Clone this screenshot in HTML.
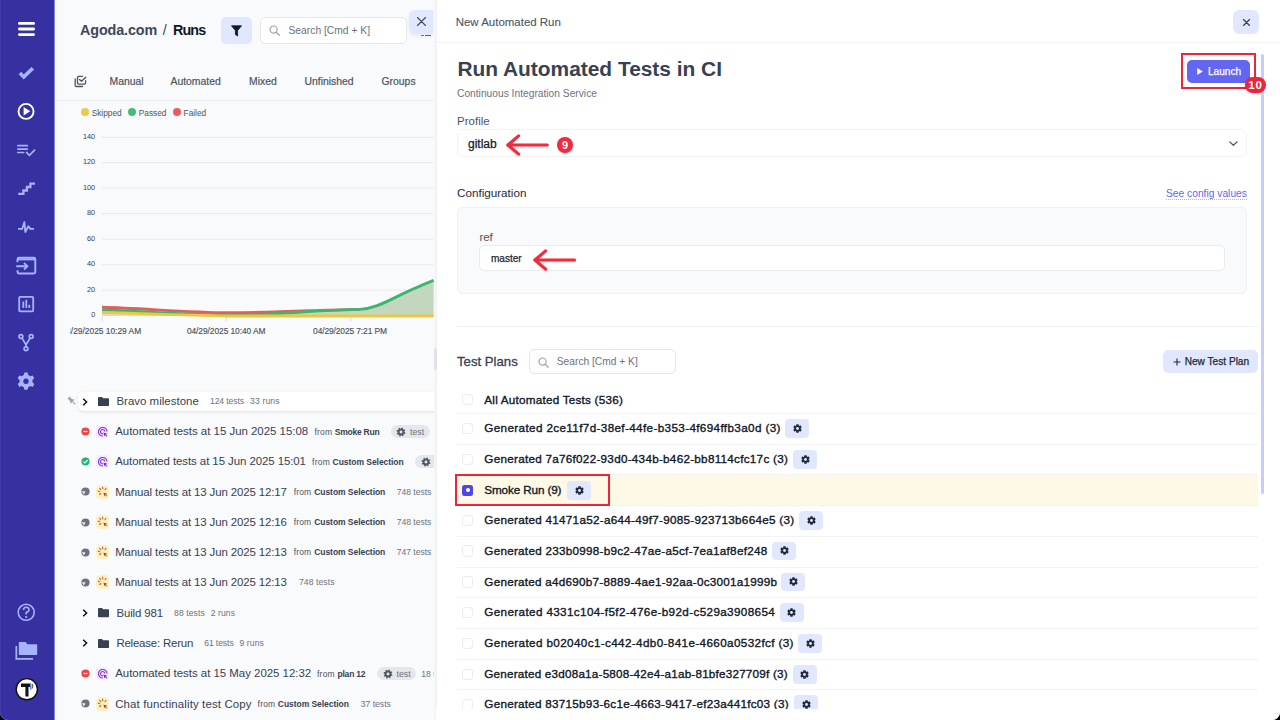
<!DOCTYPE html>
<html><head><meta charset="utf-8">
<style>
*{box-sizing:border-box;margin:0;padding:0}
html,body{width:1280px;height:720px;overflow:hidden;background:#000;font-family:"Liberation Sans",sans-serif;}
.abs{position:absolute}
#root{position:absolute;left:0;top:0;width:1280px;height:720px;overflow:hidden;border-radius:0 0 8px 8px;background:#f9fafb}
#sb{position:absolute;left:0;top:0;width:55px;height:720px;background:#3730a1;border-right:1px solid #8d86d2;box-shadow:inset 1px 0 0 #423ba8}
#sb svg{position:absolute}
#lp{position:absolute;left:0;top:0;width:433.5px;height:720px;overflow:hidden}
#dr{position:absolute;left:437px;top:0;width:843px;height:720px;background:#fff;box-shadow:-1px 0 2px rgba(0,0,0,.03)}
.t{position:absolute;white-space:nowrap;line-height:1}
b{font-weight:bold}
</style></head>
<body><div id="root">
<div id="sb"><svg width="54" height="720" viewBox="0 0 54 720" style="left:0;top:0">
<g fill="#fff">
<rect x="18" y="22" width="17" height="2.8" rx="1.4"/>
<rect x="18" y="27.6" width="17" height="2.8" rx="1.4"/>
<rect x="18" y="33.2" width="17" height="2.8" rx="1.4"/>
</g>
<path d="M19.9 73 L23.8 76.9 L32.8 68.3" fill="none" stroke="#a5b4fc" stroke-width="3.6" stroke-linecap="butt"/>
<circle cx="26.05" cy="111.4" r="7.5" fill="none" stroke="#fff" stroke-width="1.9"/>
<path d="M23.6 107 L30.2 111.3 L23.6 115.6 Z" fill="#fff"/>
<g stroke="#a5b4fc" stroke-width="1.7" fill="none" stroke-linecap="round">
<path d="M17.8 145.7 H27.3 M17.8 149.1 H27.3 M17.8 152.5 H23.6"/>
<path d="M26.5 152.3 L29.4 155.4 L34.6 150.2"/>
</g>
<path d="M18.2 193.9 H23.4 V190.5 H26.9 V187 H30.4 V183.7 H35" fill="none" stroke="#a5b4fc" stroke-width="2.3" stroke-linejoin="miter"/>
<path d="M18 228.9 H22.2 L24.4 222 L25.3 232 L28.4 226.3 L30.4 228.9 H34" fill="none" stroke="#a5b4fc" stroke-width="1.8" stroke-linejoin="round"/>
<g fill="none" stroke="#a5b4fc" stroke-width="1.9">
<path d="M17.5 262.2 V259.2 Q17.5 257.7 19 257.7 H33.8 Q35.3 257.7 35.3 259.2 V272 Q35.3 273.5 33.8 273.5 H19 Q17.5 273.5 17.5 272 V270.2"/>
<path d="M17.5 259.4 H35.3"/>
<path d="M16.3 266.2 H27.3 M24 262.9 L27.4 266.2 L24 269.5"/>
</g>
<g fill="none" stroke="#a5b4fc" stroke-width="1.8">
<rect x="19.2" y="296.9" width="14" height="14.4" rx="1"/>
</g>
<g fill="#a5b4fc">
<rect x="22.4" y="301.5" width="1.8" height="6.4"/>
<rect x="25.4" y="299.8" width="1.8" height="8.1"/>
<rect x="28.4" y="304.8" width="1.8" height="3.1"/>
</g>
<g fill="none" stroke="#a5b4fc" stroke-width="1.7">
<circle cx="20.9" cy="336.5" r="1.9"/>
<circle cx="31.2" cy="336.5" r="1.9"/>
<circle cx="26" cy="348.8" r="1.9"/>
<path d="M22 338.1 L26 344.8 L30.1 338.1 M26 344.8 V346.9"/>
</g>
<path fill="#a5b4fc" d="M24.4 372.5 h3.2 l0.6 2.5 a7 7 0 0 1 2 1.2 l2.5 -0.8 1.6 2.8 -1.9 1.8 a7 7 0 0 1 0 2.3 l1.9 1.8 -1.6 2.8 -2.5 -0.8 a7 7 0 0 1 -2 1.2 l-0.6 2.5 h-3.2 l-0.6 -2.5 a7 7 0 0 1 -2 -1.2 l-2.5 0.8 -1.6 -2.8 1.9 -1.8 a7 7 0 0 1 0 -2.3 l-1.9 -1.8 1.6 -2.8 2.5 0.8 a7 7 0 0 1 2 -1.2 z M26 378.5 a2.8 2.8 0 1 0 0.01 0 z" fill-rule="evenodd"/>
<g fill="none" stroke="#a5b4fc" stroke-width="1.6">
<circle cx="26.2" cy="612.3" r="8"/>
<path d="M23.5 610 Q23.5 607.2 26.2 607.2 Q29 607.2 29 609.8 Q29 611.6 26.2 612.6 V614.4"/>
</g>
<circle cx="26.2" cy="617" r="1.1" fill="#a5b4fc"/>
<path fill="#a5b4fc" d="M19.5 642 H25.5 L27.5 644.2 H36.5 Q37.2 644.2 37.2 645 V654.3 Q37.2 655 36.5 655 H19.5 Q18.8 655 18.8 654.3 V642.7 Q18.8 642 19.5 642 Z"/>
<path d="M16.3 646 V658.8 H33" fill="none" stroke="#a5b4fc" stroke-width="1.7"/>
<circle cx="26.8" cy="689.2" r="10.6" fill="#fff" stroke="#111" stroke-width="1.4"/>
<path d="M21 683.4 H30.8 V687 H28.5 V696.5 H25.4 V687 H21 Z" fill="#141414"/>
<rect x="30" y="684" width="1.6" height="5.6" fill="#5b8cff"/>
<rect x="32.3" y="684" width="0.8" height="4.4" fill="#222"/>
</svg></div><div id="lp"><div class="t" style="left:80.00px;top:23.12px;font-size:14.35px;color:#3f4756;font-weight:bold;letter-spacing:-0.114px;">Agoda.com</div><div class="t" style="left:162.80px;top:23.12px;font-size:14.35px;color:#3f4756;font-weight:normal;">/</div><div class="t" style="left:172.90px;top:23.12px;font-size:14.35px;color:#111827;font-weight:bold;letter-spacing:-0.820px;">Runs</div><div class="abs" style="left:221.10px;top:17.00px;width:30.80px;height:26.50px;background:#e0e7ff;border-radius:5px"></div><svg class="abs" style="left:231px;top:25px" width="11" height="12" viewBox="0 0 11 12"><path d="M0.5 0.8 H10.5 L6.6 5.6 V11 L4.4 9.6 V5.6 Z" fill="#111827" stroke="#111827" stroke-width="0.8" stroke-linejoin="round"/></svg><div class="abs" style="left:260.30px;top:17.00px;width:147.20px;height:26.60px;background:#fff;border:1px solid #e5e7eb;border-radius:5px"></div><svg class="abs" style="left:269px;top:25px" width="11" height="11" viewBox="0 0 11 11"><circle cx="4.6" cy="4.6" r="3.6" fill="none" stroke="#9ca3af" stroke-width="1.2"/><path d="M7.3 7.3 L10.2 10.2" stroke="#9ca3af" stroke-width="1.3" stroke-linecap="round"/></svg><div class="t" style="left:288.50px;top:25.65px;font-size:10.3px;color:#6b7280;font-weight:normal;">Search [Cmd + K]</div><div class="abs" style="left:408.90px;top:9.70px;width:24.60px;height:24.70px;background:#e0e7ff;border-radius:6px 0 0 6px;box-shadow:0 2px 4px rgba(0,0,0,.07)"></div><svg class="abs" style="left:416.5px;top:17.4px" width="9" height="9" viewBox="0 0 9 9"><path d="M0.6 0.6 L8.4 8.4 M8.4 0.6 L0.6 8.4" stroke="#374151" stroke-width="1.3" stroke-linecap="round"/></svg><div class="abs" style="left:420.5px;top:34.6px;width:3px;height:1.2px;background:#374151;opacity:.7"></div><div class="abs" style="left:424.8px;top:34.6px;width:6px;height:1.6px;background:#374151;opacity:.8"></div><svg class="abs" style="left:74px;top:75px" width="13" height="13" viewBox="0 0 13 13"><g fill="none" stroke="#4b5563" stroke-width="1.3" stroke-linecap="round" stroke-linejoin="round"><path d="M8.5 1.4 H4.6 Q3.5 1.4 3.5 2.5 V8.1 Q3.5 9.2 4.6 9.2 H10.5 Q11.6 9.2 11.6 8.1 V5.6"/><path d="M5.5 4.4 L7.5 6.2 L11.8 2.2"/><path d="M1.2 4 V10.4 Q1.2 11.5 2.3 11.5 H8.5"/></g></svg><div class="t" style="left:109.50px;top:76.60px;font-size:10.4px;color:#4b5563;font-weight:normal;-webkit-text-stroke-width:0.2px">Manual</div><div class="t" style="left:170.50px;top:76.60px;font-size:10.4px;color:#4b5563;font-weight:normal;-webkit-text-stroke-width:0.2px">Automated</div><div class="t" style="left:249.00px;top:76.60px;font-size:10.4px;color:#4b5563;font-weight:normal;-webkit-text-stroke-width:0.2px">Mixed</div><div class="t" style="left:304.50px;top:76.60px;font-size:10.4px;color:#4b5563;font-weight:normal;-webkit-text-stroke-width:0.2px">Unfinished</div><div class="t" style="left:381.50px;top:76.60px;font-size:10.4px;color:#4b5563;font-weight:normal;-webkit-text-stroke-width:0.2px">Groups</div><div class="abs" style="left:55.00px;top:100.00px;width:379.00px;height:1.00px;background:#eceef2"></div><div class="abs" style="left:81.1px;top:107.6px;width:8.4px;height:8.4px;border-radius:50%;background:#ecc94b"></div><div class="abs" style="left:128.1px;top:107.6px;width:8.4px;height:8.4px;border-radius:50%;background:#48bb78"></div><div class="abs" style="left:172.8px;top:107.6px;width:8.4px;height:8.4px;border-radius:50%;background:#e85d5d"></div><div class="t" style="left:91.70px;top:109.05px;font-size:8.3px;color:#4b5563;font-weight:normal;">Skipped</div><div class="t" style="left:138.75px;top:109.05px;font-size:8.3px;color:#4b5563;font-weight:normal;">Passed</div><div class="t" style="left:183.60px;top:109.05px;font-size:8.3px;color:#4b5563;font-weight:normal;">Failed</div><svg class="abs" style="left:0;top:0" width="436" height="345" viewBox="0 0 436 345"><line x1="102" y1="290.2" x2="433.5" y2="290.2" stroke="#e8eaee" stroke-width="1"/><line x1="102" y1="264.7" x2="433.5" y2="264.7" stroke="#e8eaee" stroke-width="1"/><line x1="102" y1="239.2" x2="433.5" y2="239.2" stroke="#e8eaee" stroke-width="1"/><line x1="102" y1="213.7" x2="433.5" y2="213.7" stroke="#e8eaee" stroke-width="1"/><line x1="102" y1="188.2" x2="433.5" y2="188.2" stroke="#e8eaee" stroke-width="1"/><line x1="102" y1="162.7" x2="433.5" y2="162.7" stroke="#e8eaee" stroke-width="1"/><line x1="102" y1="137.2" x2="433.5" y2="137.2" stroke="#e8eaee" stroke-width="1"/><line x1="102.2" y1="316.5" x2="102.2" y2="321" stroke="#d1d5db" stroke-width="0.8"/><line x1="226.4" y1="316.5" x2="226.4" y2="321" stroke="#d1d5db" stroke-width="0.8"/><line x1="350.6" y1="316.5" x2="350.6" y2="321" stroke="#d1d5db" stroke-width="0.8"/><path d="M102 309.9 C140 311.2 190 314.6 227 315 C265 315.2 290 312.6 320 310.9 C335 310.2 350 309.6 360 309.4 C372 308.6 382 304 395 297.6 C410 290 422 285 433.6 280.3 L433.6 316 L102 316 Z" fill="#c3d7c0"/><path d="M102 312.5 L102 316 L433.6 316 L227 316 C180 315 140 313.5 102 312.5 Z" fill="#e3dcc0"/><path d="M102 307.3 C140 308.4 190 312.4 227 312.8 C260 313 290 311.6 320 310.4 C335 310 350 309.6 360 309.4" fill="none" stroke="#e35d5f" stroke-width="2.9"/><path d="M102 309.9 C140 311.2 190 314.6 227 315 C265 315.2 290 312.6 320 310.9 C335 310.2 350 309.6 360 309.4 C372 308.6 382 304 395 297.6 C410 290 422 285 433.6 280.3" fill="none" stroke="#3cb66b" stroke-width="2.9"/><path d="M102 312.4 C140 313.5 190 315.6 227 316 L433.6 316" fill="none" stroke="#efc640" stroke-width="2.8"/></svg><div class="t" style="left:55px;width:40.2px;text-align:right;top:311.45px;font-size:7.3px;color:#374151">0</div><div class="t" style="left:55px;width:40.2px;text-align:right;top:285.95px;font-size:7.3px;color:#374151">20</div><div class="t" style="left:55px;width:40.2px;text-align:right;top:260.45px;font-size:7.3px;color:#374151">40</div><div class="t" style="left:55px;width:40.2px;text-align:right;top:234.95px;font-size:7.3px;color:#374151">60</div><div class="t" style="left:55px;width:40.2px;text-align:right;top:209.45px;font-size:7.3px;color:#374151">80</div><div class="t" style="left:55px;width:40.2px;text-align:right;top:183.95px;font-size:7.3px;color:#374151">100</div><div class="t" style="left:55px;width:40.2px;text-align:right;top:158.45px;font-size:7.3px;color:#374151">120</div><div class="t" style="left:55px;width:40.2px;text-align:right;top:132.95px;font-size:7.3px;color:#374151">140</div><div class="abs" style="left:70.2px;top:320px;width:90px;height:20px;overflow:hidden"><div class="t" style="left:-4.00px;top:6.80px;font-size:8.4px;color:#4b5563;font-weight:normal;-webkit-text-stroke-width:0.15px">4/29/2025 10:29 AM</div></div><div class="t" style="left:186.90px;top:326.80px;font-size:8.4px;color:#4b5563;font-weight:normal;letter-spacing:-0.058px;-webkit-text-stroke-width:0.15px">04/29/2025 10:40 AM</div><div class="t" style="left:313.10px;top:326.80px;font-size:8.4px;color:#4b5563;font-weight:normal;letter-spacing:-0.096px;-webkit-text-stroke-width:0.15px">04/29/2025 7:21 PM</div><div class="abs" style="left:78.00px;top:392.00px;width:362.00px;height:19.00px;background:#fff;border-radius:5px;box-shadow:0 1px 3px rgba(0,0,0,.10)"></div><svg class="abs" style="left:66.5px;top:395.5px" width="10" height="10" viewBox="0 0 10 10"><g transform="rotate(-45 5 5)"><path d="M3 0.3 H7 L6.4 1.3 V3.8 L7.9 5.9 H2.1 L3.6 3.8 V1.3 Z" fill="#9ca3af"/><path d="M5 5.8 V9.6" stroke="#9ca3af" stroke-width="1.1"/></g></svg><svg class="abs" style="left:82.4px;top:397.5px" width="6" height="8" viewBox="0 0 6 8"><path d="M1.2 0.8 L4.6 4 L1.2 7.2" fill="none" stroke="#111" stroke-width="1.5"/></svg><svg class="abs" style="left:98.1px;top:396.9px" width="11" height="9.2" viewBox="0 0 11 9.2"><path d="M0 0.9 Q0 0 0.9 0 H4 L5.1 1.2 H10.1 Q11 1.2 11 2.1 V8.3 Q11 9.2 10.1 9.2 H0.9 Q0 9.2 0 8.3 Z" fill="#374151"/></svg><div class="t" style="left:116.40px;top:396.18px;font-size:11.45px;color:#374151;font-weight:normal;letter-spacing:0.027px;">Bravo milestone</div><div class="t" style="left:210.00px;top:397.20px;font-size:8.6px;color:#6b7280;font-weight:normal;letter-spacing:-0.109px;">124 tests</div><div class="t" style="left:250.00px;top:397.20px;font-size:8.6px;color:#6b7280;font-weight:normal;letter-spacing:0.155px;">33 runs</div><svg class="abs" style="left:80.7px;top:427.1px" width="9" height="9" viewBox="0 0 9 9"><circle cx="4.5" cy="4.5" r="4.1" fill="#ef4444"/><rect x="2.5" y="3.9" width="4" height="1.2" fill="#fff"/></svg><div class="abs" style="left:96.0px;top:424.9px;width:13.3px;height:13.3px;border-radius:3.5px;background:#f4effe"></div><svg class="abs" style="left:97.9px;top:426.7px" width="10" height="10" viewBox="0 0 10 10"><g fill="none" stroke="#9333ea" stroke-width="1.15"><path d="M9 4.6 A4.3 4.3 0 1 0 4.9 9"/><path d="M6.9 4.6 A2.2 2.2 0 1 0 4.9 6.9"/></g><path d="M5.3 5.4 L9.4 6.7 L7.8 7.4 L9.5 9.1 L8.9 9.7 L7.2 8 L6.5 9.6 Z" fill="#6d28d9"/></svg><div class="t" style="left:115.20px;top:426.48px;font-size:11.45px;color:#374151;font-weight:normal;letter-spacing:-0.009px;">Automated tests at 15 Jun 2025 15:08</div><div class="t" style="left:314.40px;top:427.55px;font-size:8.5px;color:#4b5563;font-weight:normal;letter-spacing:0.200px;">from</div><div class="t" style="left:334.80px;top:427.55px;font-size:8.5px;color:#374151;font-weight:bold;letter-spacing:-0.246px;">Smoke Run</div><div class="abs" style="left:390.8px;top:425.1px;width:38.8px;height:13px;border-radius:7px;background:#e5e7eb"></div><svg class="abs" style="left:396.3px;top:426.6px" width="10" height="10" viewBox="0 0 10 10"><path d="M5.00,1.60 L5.90,0.49 L6.76,0.75 L6.89,2.17 L7.41,2.59 L8.82,2.44 L9.25,3.24 L8.34,4.34 L8.40,5.00 L9.51,5.90 L9.25,6.76 L7.83,6.89 L7.41,7.41 L7.56,8.82 L6.76,9.25 L5.66,8.34 L5.00,8.40 L4.10,9.51 L3.24,9.25 L3.11,7.83 L2.59,7.41 L1.18,7.56 L0.75,6.76 L1.66,5.66 L1.60,5.00 L0.49,4.10 L0.75,3.24 L2.17,3.11 L2.59,2.59 L2.44,1.18 L3.24,0.75 L4.34,1.66 Z M6.47,5.00 A1.47,1.47 0 1 0 3.53,5.00 A1.47,1.47 0 1 0 6.47,5.00 Z" fill="#4b5563" fill-rule="evenodd"/></svg><div class="t" style="left:410.00px;top:427.50px;font-size:8.8px;color:#6b7280;font-weight:normal;">test</div><svg class="abs" style="left:80.7px;top:457.1px" width="9" height="9" viewBox="0 0 9 9"><circle cx="4.5" cy="4.5" r="4.1" fill="#22b573"/><path d="M2.4 4.6 L3.9 6 L6.6 3.2" fill="none" stroke="#fff" stroke-width="1.1"/></svg><div class="abs" style="left:96.0px;top:454.9px;width:13.3px;height:13.3px;border-radius:3.5px;background:#f4effe"></div><svg class="abs" style="left:97.9px;top:456.7px" width="10" height="10" viewBox="0 0 10 10"><g fill="none" stroke="#9333ea" stroke-width="1.15"><path d="M9 4.6 A4.3 4.3 0 1 0 4.9 9"/><path d="M6.9 4.6 A2.2 2.2 0 1 0 4.9 6.9"/></g><path d="M5.3 5.4 L9.4 6.7 L7.8 7.4 L9.5 9.1 L8.9 9.7 L7.2 8 L6.5 9.6 Z" fill="#6d28d9"/></svg><div class="t" style="left:115.20px;top:456.48px;font-size:11.45px;color:#374151;font-weight:normal;letter-spacing:-0.072px;">Automated tests at 15 Jun 2025 15:01</div><div class="t" style="left:312.00px;top:457.55px;font-size:8.5px;color:#4b5563;font-weight:normal;letter-spacing:0.267px;">from</div><div class="t" style="left:332.60px;top:457.55px;font-size:8.5px;color:#374151;font-weight:bold;letter-spacing:-0.046px;">Custom Selection</div><div class="abs" style="left:415.0px;top:455.1px;width:30px;height:13px;border-radius:7px;background:#e5e7eb"></div><svg class="abs" style="left:420.5px;top:456.6px" width="10" height="10" viewBox="0 0 10 10"><path d="M5.00,1.60 L5.90,0.49 L6.76,0.75 L6.89,2.17 L7.41,2.59 L8.82,2.44 L9.25,3.24 L8.34,4.34 L8.40,5.00 L9.51,5.90 L9.25,6.76 L7.83,6.89 L7.41,7.41 L7.56,8.82 L6.76,9.25 L5.66,8.34 L5.00,8.40 L4.10,9.51 L3.24,9.25 L3.11,7.83 L2.59,7.41 L1.18,7.56 L0.75,6.76 L1.66,5.66 L1.60,5.00 L0.49,4.10 L0.75,3.24 L2.17,3.11 L2.59,2.59 L2.44,1.18 L3.24,0.75 L4.34,1.66 Z M6.47,5.00 A1.47,1.47 0 1 0 3.53,5.00 A1.47,1.47 0 1 0 6.47,5.00 Z" fill="#4b5563" fill-rule="evenodd"/></svg><svg class="abs" style="left:80.7px;top:487.3px" width="9" height="9" viewBox="0 0 9 9"><circle cx="4.5" cy="4.5" r="4.1" fill="#6b7280"/><path d="M1 3.9 L4.6 4.5 L2.6 7.6 Z" fill="#fff" opacity=".9"/></svg><div class="abs" style="left:95.8px;top:484.8px;width:13.5px;height:14px;border-radius:4px;background:#fdf1c8"></div><svg class="abs" style="left:95.8px;top:484.8px" width="13.5" height="14" viewBox="0 0 13.5 14"><path d="M4.71 4.45 L3.69 3.35 M6.80 3.74 L6.60 2.26 M9.08 4.62 L9.92 3.38 M3.73 6.55 L2.27 6.25 M4.86 8.64 L3.54 9.36" stroke="#c8621a" stroke-width="1.3" stroke-linecap="round" opacity=".85"/><path d="M7.4 7.4 L11.3 8.7 L9.8 9.4 L11.4 11 L10.8 11.6 L9.2 10 L8.5 11.5 Z" fill="#b9470e"/></svg><div class="t" style="left:115.20px;top:486.68px;font-size:11.45px;color:#374151;font-weight:normal;letter-spacing:-0.116px;">Manual tests at 13 Jun 2025 12:17</div><div class="t" style="left:293.80px;top:487.75px;font-size:8.5px;color:#4b5563;font-weight:normal;letter-spacing:0.100px;">from</div><div class="t" style="left:314.20px;top:487.75px;font-size:8.5px;color:#374151;font-weight:bold;letter-spacing:-0.046px;">Custom Selection</div><div class="t" style="left:396.70px;top:487.70px;font-size:8.6px;color:#6b7280;font-weight:normal;letter-spacing:-0.022px;">748 tests</div><svg class="abs" style="left:80.7px;top:517.5px" width="9" height="9" viewBox="0 0 9 9"><circle cx="4.5" cy="4.5" r="4.1" fill="#6b7280"/><path d="M1 3.9 L4.6 4.5 L2.6 7.6 Z" fill="#fff" opacity=".9"/></svg><div class="abs" style="left:95.8px;top:515.0px;width:13.5px;height:14px;border-radius:4px;background:#fdf1c8"></div><svg class="abs" style="left:95.8px;top:515.0px" width="13.5" height="14" viewBox="0 0 13.5 14"><path d="M4.71 4.45 L3.69 3.35 M6.80 3.74 L6.60 2.26 M9.08 4.62 L9.92 3.38 M3.73 6.55 L2.27 6.25 M4.86 8.64 L3.54 9.36" stroke="#c8621a" stroke-width="1.3" stroke-linecap="round" opacity=".85"/><path d="M7.4 7.4 L11.3 8.7 L9.8 9.4 L11.4 11 L10.8 11.6 L9.2 10 L8.5 11.5 Z" fill="#b9470e"/></svg><div class="t" style="left:115.20px;top:516.88px;font-size:11.45px;color:#374151;font-weight:normal;letter-spacing:-0.116px;">Manual tests at 13 Jun 2025 12:16</div><div class="t" style="left:293.80px;top:517.95px;font-size:8.5px;color:#4b5563;font-weight:normal;letter-spacing:0.100px;">from</div><div class="t" style="left:314.20px;top:517.95px;font-size:8.5px;color:#374151;font-weight:bold;letter-spacing:-0.046px;">Custom Selection</div><div class="t" style="left:396.70px;top:517.90px;font-size:8.6px;color:#6b7280;font-weight:normal;letter-spacing:-0.022px;">748 tests</div><svg class="abs" style="left:80.7px;top:547.6px" width="9" height="9" viewBox="0 0 9 9"><circle cx="4.5" cy="4.5" r="4.1" fill="#6b7280"/><path d="M1 3.9 L4.6 4.5 L2.6 7.6 Z" fill="#fff" opacity=".9"/></svg><div class="abs" style="left:95.8px;top:545.1px;width:13.5px;height:14px;border-radius:4px;background:#fdf1c8"></div><svg class="abs" style="left:95.8px;top:545.1px" width="13.5" height="14" viewBox="0 0 13.5 14"><path d="M4.71 4.45 L3.69 3.35 M6.80 3.74 L6.60 2.26 M9.08 4.62 L9.92 3.38 M3.73 6.55 L2.27 6.25 M4.86 8.64 L3.54 9.36" stroke="#c8621a" stroke-width="1.3" stroke-linecap="round" opacity=".85"/><path d="M7.4 7.4 L11.3 8.7 L9.8 9.4 L11.4 11 L10.8 11.6 L9.2 10 L8.5 11.5 Z" fill="#b9470e"/></svg><div class="t" style="left:115.20px;top:546.98px;font-size:11.45px;color:#374151;font-weight:normal;letter-spacing:-0.116px;">Manual tests at 13 Jun 2025 12:13</div><div class="t" style="left:293.80px;top:548.05px;font-size:8.5px;color:#4b5563;font-weight:normal;letter-spacing:0.100px;">from</div><div class="t" style="left:314.20px;top:548.05px;font-size:8.5px;color:#374151;font-weight:bold;letter-spacing:-0.046px;">Custom Selection</div><div class="t" style="left:396.70px;top:548.00px;font-size:8.6px;color:#6b7280;font-weight:normal;letter-spacing:-0.022px;">747 tests</div><svg class="abs" style="left:80.7px;top:577.8px" width="9" height="9" viewBox="0 0 9 9"><circle cx="4.5" cy="4.5" r="4.1" fill="#6b7280"/><path d="M1 3.9 L4.6 4.5 L2.6 7.6 Z" fill="#fff" opacity=".9"/></svg><div class="abs" style="left:95.8px;top:575.3px;width:13.5px;height:14px;border-radius:4px;background:#fdf1c8"></div><svg class="abs" style="left:95.8px;top:575.3px" width="13.5" height="14" viewBox="0 0 13.5 14"><path d="M4.71 4.45 L3.69 3.35 M6.80 3.74 L6.60 2.26 M9.08 4.62 L9.92 3.38 M3.73 6.55 L2.27 6.25 M4.86 8.64 L3.54 9.36" stroke="#c8621a" stroke-width="1.3" stroke-linecap="round" opacity=".85"/><path d="M7.4 7.4 L11.3 8.7 L9.8 9.4 L11.4 11 L10.8 11.6 L9.2 10 L8.5 11.5 Z" fill="#b9470e"/></svg><div class="t" style="left:115.20px;top:577.17px;font-size:11.45px;color:#374151;font-weight:normal;letter-spacing:-0.116px;">Manual tests at 13 Jun 2025 12:13</div><div class="t" style="left:299.00px;top:578.20px;font-size:8.6px;color:#6b7280;font-weight:normal;letter-spacing:0.078px;">748 tests</div><svg class="abs" style="left:82.4px;top:609.0px" width="6" height="8" viewBox="0 0 6 8"><path d="M1.2 0.8 L4.6 4 L1.2 7.2" fill="none" stroke="#111" stroke-width="1.5"/></svg><svg class="abs" style="left:98.1px;top:608.4px" width="11" height="9.2" viewBox="0 0 11 9.2"><path d="M0 0.9 Q0 0 0.9 0 H4 L5.1 1.2 H10.1 Q11 1.2 11 2.1 V8.3 Q11 9.2 10.1 9.2 H0.9 Q0 9.2 0 8.3 Z" fill="#374151"/></svg><div class="t" style="left:116.40px;top:607.67px;font-size:11.45px;color:#374151;font-weight:normal;letter-spacing:-0.113px;">Build 981</div><div class="t" style="left:174.00px;top:608.70px;font-size:8.6px;color:#6b7280;font-weight:normal;letter-spacing:0.099px;">88 tests</div><div class="t" style="left:210.80px;top:608.70px;font-size:8.6px;color:#6b7280;font-weight:normal;letter-spacing:0.062px;">2 runs</div><svg class="abs" style="left:82.4px;top:639.4px" width="6" height="8" viewBox="0 0 6 8"><path d="M1.2 0.8 L4.6 4 L1.2 7.2" fill="none" stroke="#111" stroke-width="1.5"/></svg><svg class="abs" style="left:98.1px;top:638.8px" width="11" height="9.2" viewBox="0 0 11 9.2"><path d="M0 0.9 Q0 0 0.9 0 H4 L5.1 1.2 H10.1 Q11 1.2 11 2.1 V8.3 Q11 9.2 10.1 9.2 H0.9 Q0 9.2 0 8.3 Z" fill="#374151"/></svg><div class="t" style="left:116.40px;top:638.08px;font-size:11.45px;color:#374151;font-weight:normal;letter-spacing:-0.199px;">Release: Rerun</div><div class="t" style="left:204.20px;top:639.10px;font-size:8.6px;color:#6b7280;font-weight:normal;letter-spacing:-0.087px;">61 tests</div><div class="t" style="left:239.50px;top:639.10px;font-size:8.6px;color:#6b7280;font-weight:normal;letter-spacing:0.102px;">9 runs</div><svg class="abs" style="left:80.7px;top:669.1px" width="9" height="9" viewBox="0 0 9 9"><circle cx="4.5" cy="4.5" r="4.1" fill="#ef4444"/><rect x="2.5" y="3.9" width="4" height="1.2" fill="#fff"/></svg><div class="abs" style="left:96.0px;top:666.9px;width:13.3px;height:13.3px;border-radius:3.5px;background:#f4effe"></div><svg class="abs" style="left:97.9px;top:668.7px" width="10" height="10" viewBox="0 0 10 10"><g fill="none" stroke="#9333ea" stroke-width="1.15"><path d="M9 4.6 A4.3 4.3 0 1 0 4.9 9"/><path d="M6.9 4.6 A2.2 2.2 0 1 0 4.9 6.9"/></g><path d="M5.3 5.4 L9.4 6.7 L7.8 7.4 L9.5 9.1 L8.9 9.7 L7.2 8 L6.5 9.6 Z" fill="#6d28d9"/></svg><div class="t" style="left:115.20px;top:668.48px;font-size:11.45px;color:#374151;font-weight:normal;letter-spacing:-0.014px;">Automated tests at 15 May 2025 12:32</div><div class="t" style="left:317.00px;top:669.55px;font-size:8.5px;color:#4b5563;font-weight:normal;letter-spacing:0.233px;">from</div><div class="t" style="left:337.50px;top:669.55px;font-size:8.5px;color:#374151;font-weight:bold;letter-spacing:-0.216px;">plan 12</div><div class="abs" style="left:377.3px;top:667.1px;width:38.8px;height:13px;border-radius:7px;background:#e5e7eb"></div><svg class="abs" style="left:382.8px;top:668.6px" width="10" height="10" viewBox="0 0 10 10"><path d="M5.00,1.60 L5.90,0.49 L6.76,0.75 L6.89,2.17 L7.41,2.59 L8.82,2.44 L9.25,3.24 L8.34,4.34 L8.40,5.00 L9.51,5.90 L9.25,6.76 L7.83,6.89 L7.41,7.41 L7.56,8.82 L6.76,9.25 L5.66,8.34 L5.00,8.40 L4.10,9.51 L3.24,9.25 L3.11,7.83 L2.59,7.41 L1.18,7.56 L0.75,6.76 L1.66,5.66 L1.60,5.00 L0.49,4.10 L0.75,3.24 L2.17,3.11 L2.59,2.59 L2.44,1.18 L3.24,0.75 L4.34,1.66 Z M6.47,5.00 A1.47,1.47 0 1 0 3.53,5.00 A1.47,1.47 0 1 0 6.47,5.00 Z" fill="#4b5563" fill-rule="evenodd"/></svg><div class="t" style="left:396.50px;top:669.50px;font-size:8.8px;color:#6b7280;font-weight:normal;">test</div><div class="t" style="left:421.30px;top:669.50px;font-size:8.6px;color:#6b7280;font-weight:normal;">18 tests</div><svg class="abs" style="left:80.7px;top:699.3px" width="9" height="9" viewBox="0 0 9 9"><circle cx="4.5" cy="4.5" r="4.1" fill="#6b7280"/><path d="M1 3.9 L4.6 4.5 L2.6 7.6 Z" fill="#fff" opacity=".9"/></svg><div class="abs" style="left:95.8px;top:696.8px;width:13.5px;height:14px;border-radius:4px;background:#fdf1c8"></div><svg class="abs" style="left:95.8px;top:696.8px" width="13.5" height="14" viewBox="0 0 13.5 14"><path d="M4.71 4.45 L3.69 3.35 M6.80 3.74 L6.60 2.26 M9.08 4.62 L9.92 3.38 M3.73 6.55 L2.27 6.25 M4.86 8.64 L3.54 9.36" stroke="#c8621a" stroke-width="1.3" stroke-linecap="round" opacity=".85"/><path d="M7.4 7.4 L11.3 8.7 L9.8 9.4 L11.4 11 L10.8 11.6 L9.2 10 L8.5 11.5 Z" fill="#b9470e"/></svg><div class="t" style="left:115.20px;top:698.67px;font-size:11.45px;color:#374151;font-weight:normal;letter-spacing:0.132px;">Chat functinality test Copy</div><div class="t" style="left:257.60px;top:699.75px;font-size:8.5px;color:#4b5563;font-weight:normal;letter-spacing:0.200px;">from</div><div class="t" style="left:277.80px;top:699.75px;font-size:8.5px;color:#374151;font-weight:bold;letter-spacing:-0.046px;">Custom Selection</div><div class="t" style="left:360.70px;top:699.70px;font-size:8.6px;color:#6b7280;font-weight:normal;letter-spacing:0.013px;">37 tests</div></div><div class="abs" style="left:433.5px;top:0;width:3.5px;height:720px;background:#f5f6f7"></div><div class="abs" style="left:433.80px;top:348.00px;width:3.20px;height:22.00px;background:#e3e4e8;border-radius:2px"></div><div id="dr"></div><div class="t" style="left:455.70px;top:17.27px;font-size:11.47px;color:#4b5563;font-weight:normal;-webkit-text-stroke-width:0.1px">New Automated Run</div><div class="abs" style="left:1233.30px;top:10.20px;width:25.30px;height:23.60px;background:#e0e7ff;border-radius:6px"></div><svg class="abs" style="left:1242.6px;top:18.6px" width="7" height="7" viewBox="0 0 7 7"><path d="M0.5 0.5 L6.5 6.5 M6.5 0.5 L0.5 6.5" stroke="#374151" stroke-width="1.25" stroke-linecap="round"/></svg><div class="abs" style="left:437.00px;top:42.00px;width:843.00px;height:1.00px;background:#f2f3f5"></div><div class="t" style="left:457.40px;top:59.15px;font-size:20.9px;color:#374151;font-weight:bold;">Run Automated Tests in CI</div><div class="t" style="left:457.00px;top:89.08px;font-size:10.24px;color:#6b7280;font-weight:normal;">Continuous Integration Service</div><div class="abs" style="left:1181.20px;top:53.00px;width:74.80px;height:36.20px;border:2px solid #ee2438"></div><div class="abs" style="left:1186.80px;top:59.60px;width:63.20px;height:23.20px;background:#6366f1;border-radius:5px"></div><svg class="abs" style="left:1197px;top:67.6px" width="6" height="7" viewBox="0 0 6 7"><path d="M0.2 0 L5.8 3.5 L0.2 7 Z" fill="#fff"/></svg><div class="t" style="left:1207.90px;top:67.15px;font-size:10.1px;color:#fff;font-weight:normal;letter-spacing:0.015px;-webkit-text-stroke:0.25px #fff">Launch</div><div class="t" style="left:457.00px;top:115.63px;font-size:11.54px;color:#4b5563;font-weight:normal;">Profile</div><div class="abs" style="left:456.70px;top:129.30px;width:790.00px;height:28.10px;background:#fff;border:1px solid #f1f2f4;border-radius:6px"></div><div class="t" style="left:468.00px;top:138.00px;font-size:12px;color:#111827;font-weight:normal;-webkit-text-stroke-width:0.25px">gitlab</div><svg class="abs" style="left:1228.6px;top:140.6px" width="9" height="6" viewBox="0 0 9 6"><path d="M0.8 0.9 L4.4 4.3 L8 0.9" fill="none" stroke="#4b5563" stroke-width="1.3" stroke-linecap="round" stroke-linejoin="round"/></svg><svg class="abs" style="left:504.0px;top:132.6px;filter:drop-shadow(0 1px 1px rgba(0,0,0,.12))" width="47.8" height="24" viewBox="0 0 47.8 24"><g fill="none" stroke="#f22a3f" stroke-width="3.1" stroke-linecap="round" stroke-linejoin="round"><path d="M4 12 H43.3"/><path d="M14.6 2.8 L4 12 L14.6 21.2"/></g></svg><div class="abs" style="left:557.4px;top:136.9px;width:15.8px;height:15.8px;border-radius:50%;background:#f22a3f;box-shadow:0 1px 2px rgba(0,0,0,.12)"></div><div class="t" style="left:561.90px;top:139.50px;font-size:11px;color:#fff;font-weight:bold;">9</div><div class="t" style="left:457.00px;top:186.76px;font-size:11.68px;color:#1f2937;font-weight:normal;">Configuration</div><div class="t" style="left:1166.00px;top:188.67px;font-size:10.26px;color:#6366f1;font-weight:normal;">See config values</div><div class="abs" style="left:1166.00px;top:199.00px;width:81.00px;height:1.00px;border-top:1px dotted #a5b4fc"></div><div class="abs" style="left:457.00px;top:207.20px;width:789.70px;height:86.40px;background:#f9fafb;border:1px solid #f0f1f3;border-radius:6px"></div><div class="t" style="left:479.40px;top:231.85px;font-size:11.5px;color:#4b5563;font-weight:normal;">ref</div><div class="abs" style="left:479.40px;top:245.40px;width:745.80px;height:26.00px;background:#fff;border:1px solid #e9ebee;border-radius:5px"></div><div class="t" style="left:490.90px;top:253.96px;font-size:10.08px;color:#1f2937;font-weight:normal;-webkit-text-stroke-width:0.25px">master</div><svg class="abs" style="left:530.5px;top:247.5px;filter:drop-shadow(0 1px 1px rgba(0,0,0,.12))" width="48.0" height="24" viewBox="0 0 48.0 24"><g fill="none" stroke="#f22a3f" stroke-width="3.1" stroke-linecap="round" stroke-linejoin="round"><path d="M4 12 H43.5"/><path d="M14.6 2.8 L4 12 L14.6 21.2"/></g></svg><div class="abs" style="left:457.00px;top:326.00px;width:801.00px;height:1.00px;background:#eff0f2"></div><div class="t" style="left:457.00px;top:355.01px;font-size:13.18px;color:#374151;font-weight:normal;-webkit-text-stroke-width:0.3px">Test Plans</div><div class="abs" style="left:528.60px;top:349.30px;width:147.60px;height:24.90px;background:#fff;border:1px solid #e5e7eb;border-radius:5px"></div><svg class="abs" style="left:538px;top:356.5px" width="11" height="11" viewBox="0 0 11 11"><circle cx="4.6" cy="4.6" r="3.6" fill="none" stroke="#9ca3af" stroke-width="1.2"/><path d="M7.3 7.3 L10.2 10.2" stroke="#9ca3af" stroke-width="1.3" stroke-linecap="round"/></svg><div class="t" style="left:556.80px;top:356.69px;font-size:10.23px;color:#6b7280;font-weight:normal;">Search [Cmd + K]</div><div class="abs" style="left:1163.30px;top:350.00px;width:94.50px;height:23.30px;background:#e0e7ff;border-radius:5px"></div><svg class="abs" style="left:1172.6px;top:358px" width="8" height="8" viewBox="0 0 8 8"><path d="M4 0.5 V7.5 M0.5 4 H7.5" stroke="#1f2937" stroke-width="1.1"/></svg><div class="t" style="left:1184.70px;top:357.34px;font-size:10.12px;color:#1f2937;font-weight:normal;-webkit-text-stroke-width:0.25px">New Test Plan</div><div class="abs" style="left:457.00px;top:474.40px;width:801.30px;height:30.70px;background:#fdf9e6"></div><div class="abs" style="left:457.00px;top:413.00px;width:801.30px;height:1.00px;background:#f2f3f5"></div><div class="abs" style="left:457.00px;top:443.70px;width:801.30px;height:1.00px;background:#f2f3f5"></div><div class="abs" style="left:457.00px;top:474.40px;width:801.30px;height:1.00px;background:#f2f3f5"></div><div class="abs" style="left:457.00px;top:505.10px;width:801.30px;height:1.00px;background:#f2f3f5"></div><div class="abs" style="left:457.00px;top:535.80px;width:801.30px;height:1.00px;background:#f2f3f5"></div><div class="abs" style="left:457.00px;top:566.50px;width:801.30px;height:1.00px;background:#f2f3f5"></div><div class="abs" style="left:457.00px;top:597.20px;width:801.30px;height:1.00px;background:#f2f3f5"></div><div class="abs" style="left:457.00px;top:627.90px;width:801.30px;height:1.00px;background:#f2f3f5"></div><div class="abs" style="left:457.00px;top:658.60px;width:801.30px;height:1.00px;background:#f2f3f5"></div><div class="abs" style="left:457.00px;top:689.30px;width:801.30px;height:1.00px;background:#f2f3f5"></div><div class="abs" style="left:462.30px;top:394.10px;width:11.20px;height:11.20px;background:#fff;border:1px solid #eaecef;border-radius:3px"></div><div class="t" style="left:484.30px;top:393.55px;font-size:11.7px;color:#111827;font-weight:normal;letter-spacing:0.230px;-webkit-text-stroke:0.35px #111827">All Automated Tests (536)</div><div class="abs" style="left:462.30px;top:423.00px;width:11.20px;height:11.20px;background:#fff;border:1px solid #eaecef;border-radius:3px"></div><div class="t" style="left:484.30px;top:422.45px;font-size:11.7px;color:#111827;font-weight:normal;letter-spacing:0.363px;-webkit-text-stroke:0.35px #111827">Generated 2ce11f7d-38ef-44fe-b353-4f694ffb3a0d (3)</div><div class="abs" style="left:785.10px;top:419.20px;width:24.00px;height:18.80px;background:#e0e7ff;border-radius:4px"></div><svg class="abs" style="left:792.6px;top:424.0px" width="9" height="9" viewBox="0 0 9 9"><g fill="#1f2937"><rect x="3.30" y="0.20" width="2.4" height="2.15" rx="0.3" transform="rotate(0 4.5 4.5)"/><rect x="3.30" y="0.20" width="2.4" height="2.15" rx="0.3" transform="rotate(60 4.5 4.5)"/><rect x="3.30" y="0.20" width="2.4" height="2.15" rx="0.3" transform="rotate(120 4.5 4.5)"/><rect x="3.30" y="0.20" width="2.4" height="2.15" rx="0.3" transform="rotate(180 4.5 4.5)"/><rect x="3.30" y="0.20" width="2.4" height="2.15" rx="0.3" transform="rotate(240 4.5 4.5)"/><rect x="3.30" y="0.20" width="2.4" height="2.15" rx="0.3" transform="rotate(300 4.5 4.5)"/></g><circle cx="4.5" cy="4.5" r="2.37" fill="none" stroke="#1f2937" stroke-width="1.81"/></svg><div class="abs" style="left:462.30px;top:453.80px;width:11.20px;height:11.20px;background:#fff;border:1px solid #eaecef;border-radius:3px"></div><div class="t" style="left:484.30px;top:453.25px;font-size:11.7px;color:#111827;font-weight:normal;letter-spacing:0.272px;-webkit-text-stroke:0.35px #111827">Generated 7a76f022-93d0-434b-b462-bb8114cfc17c (3)</div><div class="abs" style="left:793.30px;top:450.00px;width:24.00px;height:18.80px;background:#e0e7ff;border-radius:4px"></div><svg class="abs" style="left:800.8px;top:454.8px" width="9" height="9" viewBox="0 0 9 9"><g fill="#1f2937"><rect x="3.30" y="0.20" width="2.4" height="2.15" rx="0.3" transform="rotate(0 4.5 4.5)"/><rect x="3.30" y="0.20" width="2.4" height="2.15" rx="0.3" transform="rotate(60 4.5 4.5)"/><rect x="3.30" y="0.20" width="2.4" height="2.15" rx="0.3" transform="rotate(120 4.5 4.5)"/><rect x="3.30" y="0.20" width="2.4" height="2.15" rx="0.3" transform="rotate(180 4.5 4.5)"/><rect x="3.30" y="0.20" width="2.4" height="2.15" rx="0.3" transform="rotate(240 4.5 4.5)"/><rect x="3.30" y="0.20" width="2.4" height="2.15" rx="0.3" transform="rotate(300 4.5 4.5)"/></g><circle cx="4.5" cy="4.5" r="2.37" fill="none" stroke="#1f2937" stroke-width="1.81"/></svg><div class="abs" style="left:462.30px;top:484.60px;width:11.20px;height:11.20px;background:#4f46e5;border-radius:2.5px"></div><div class="abs" style="left:465.60px;top:487.90px;width:4.60px;height:4.60px;background:#fff;border-radius:50%"></div><div class="t" style="left:484.30px;top:484.05px;font-size:11.7px;color:#111827;font-weight:normal;letter-spacing:-0.117px;-webkit-text-stroke:0.35px #111827">Smoke Run (9)</div><div class="abs" style="left:567.30px;top:480.80px;width:24.00px;height:18.80px;background:#e0e7ff;border-radius:4px"></div><svg class="abs" style="left:574.8px;top:485.6px" width="9" height="9" viewBox="0 0 9 9"><g fill="#1f2937"><rect x="3.30" y="0.20" width="2.4" height="2.15" rx="0.3" transform="rotate(0 4.5 4.5)"/><rect x="3.30" y="0.20" width="2.4" height="2.15" rx="0.3" transform="rotate(60 4.5 4.5)"/><rect x="3.30" y="0.20" width="2.4" height="2.15" rx="0.3" transform="rotate(120 4.5 4.5)"/><rect x="3.30" y="0.20" width="2.4" height="2.15" rx="0.3" transform="rotate(180 4.5 4.5)"/><rect x="3.30" y="0.20" width="2.4" height="2.15" rx="0.3" transform="rotate(240 4.5 4.5)"/><rect x="3.30" y="0.20" width="2.4" height="2.15" rx="0.3" transform="rotate(300 4.5 4.5)"/></g><circle cx="4.5" cy="4.5" r="2.37" fill="none" stroke="#1f2937" stroke-width="1.81"/></svg><div class="abs" style="left:462.30px;top:514.80px;width:11.20px;height:11.20px;background:#fff;border:1px solid #eaecef;border-radius:3px"></div><div class="t" style="left:484.30px;top:514.25px;font-size:11.7px;color:#111827;font-weight:normal;letter-spacing:0.275px;-webkit-text-stroke:0.35px #111827">Generated 41471a52-a644-49f7-9085-923713b664e5 (3)</div><div class="abs" style="left:799.20px;top:511.00px;width:24.00px;height:18.80px;background:#e0e7ff;border-radius:4px"></div><svg class="abs" style="left:806.7px;top:515.8px" width="9" height="9" viewBox="0 0 9 9"><g fill="#1f2937"><rect x="3.30" y="0.20" width="2.4" height="2.15" rx="0.3" transform="rotate(0 4.5 4.5)"/><rect x="3.30" y="0.20" width="2.4" height="2.15" rx="0.3" transform="rotate(60 4.5 4.5)"/><rect x="3.30" y="0.20" width="2.4" height="2.15" rx="0.3" transform="rotate(120 4.5 4.5)"/><rect x="3.30" y="0.20" width="2.4" height="2.15" rx="0.3" transform="rotate(180 4.5 4.5)"/><rect x="3.30" y="0.20" width="2.4" height="2.15" rx="0.3" transform="rotate(240 4.5 4.5)"/><rect x="3.30" y="0.20" width="2.4" height="2.15" rx="0.3" transform="rotate(300 4.5 4.5)"/></g><circle cx="4.5" cy="4.5" r="2.37" fill="none" stroke="#1f2937" stroke-width="1.81"/></svg><div class="abs" style="left:462.30px;top:545.40px;width:11.20px;height:11.20px;background:#fff;border:1px solid #eaecef;border-radius:3px"></div><div class="t" style="left:484.30px;top:544.85px;font-size:11.7px;color:#111827;font-weight:normal;letter-spacing:0.265px;-webkit-text-stroke:0.35px #111827">Generated 233b0998-b9c2-47ae-a5cf-7ea1af8ef248</div><div class="abs" style="left:772.00px;top:541.60px;width:24.00px;height:18.80px;background:#e0e7ff;border-radius:4px"></div><svg class="abs" style="left:779.5px;top:546.4px" width="9" height="9" viewBox="0 0 9 9"><g fill="#1f2937"><rect x="3.30" y="0.20" width="2.4" height="2.15" rx="0.3" transform="rotate(0 4.5 4.5)"/><rect x="3.30" y="0.20" width="2.4" height="2.15" rx="0.3" transform="rotate(60 4.5 4.5)"/><rect x="3.30" y="0.20" width="2.4" height="2.15" rx="0.3" transform="rotate(120 4.5 4.5)"/><rect x="3.30" y="0.20" width="2.4" height="2.15" rx="0.3" transform="rotate(180 4.5 4.5)"/><rect x="3.30" y="0.20" width="2.4" height="2.15" rx="0.3" transform="rotate(240 4.5 4.5)"/><rect x="3.30" y="0.20" width="2.4" height="2.15" rx="0.3" transform="rotate(300 4.5 4.5)"/></g><circle cx="4.5" cy="4.5" r="2.37" fill="none" stroke="#1f2937" stroke-width="1.81"/></svg><div class="abs" style="left:462.30px;top:576.40px;width:11.20px;height:11.20px;background:#fff;border:1px solid #eaecef;border-radius:3px"></div><div class="t" style="left:484.30px;top:575.85px;font-size:11.7px;color:#111827;font-weight:normal;letter-spacing:0.254px;-webkit-text-stroke:0.35px #111827">Generated a4d690b7-8889-4ae1-92aa-0c3001a1999b</div><div class="abs" style="left:781.20px;top:572.60px;width:24.00px;height:18.80px;background:#e0e7ff;border-radius:4px"></div><svg class="abs" style="left:788.7px;top:577.4px" width="9" height="9" viewBox="0 0 9 9"><g fill="#1f2937"><rect x="3.30" y="0.20" width="2.4" height="2.15" rx="0.3" transform="rotate(0 4.5 4.5)"/><rect x="3.30" y="0.20" width="2.4" height="2.15" rx="0.3" transform="rotate(60 4.5 4.5)"/><rect x="3.30" y="0.20" width="2.4" height="2.15" rx="0.3" transform="rotate(120 4.5 4.5)"/><rect x="3.30" y="0.20" width="2.4" height="2.15" rx="0.3" transform="rotate(180 4.5 4.5)"/><rect x="3.30" y="0.20" width="2.4" height="2.15" rx="0.3" transform="rotate(240 4.5 4.5)"/><rect x="3.30" y="0.20" width="2.4" height="2.15" rx="0.3" transform="rotate(300 4.5 4.5)"/></g><circle cx="4.5" cy="4.5" r="2.37" fill="none" stroke="#1f2937" stroke-width="1.81"/></svg><div class="abs" style="left:462.30px;top:606.90px;width:11.20px;height:11.20px;background:#fff;border:1px solid #eaecef;border-radius:3px"></div><div class="t" style="left:484.30px;top:606.35px;font-size:11.7px;color:#111827;font-weight:normal;letter-spacing:0.361px;-webkit-text-stroke:0.35px #111827">Generated 4331c104-f5f2-476e-b92d-c529a3908654</div><div class="abs" style="left:779.60px;top:603.10px;width:24.00px;height:18.80px;background:#e0e7ff;border-radius:4px"></div><svg class="abs" style="left:787.1px;top:607.9px" width="9" height="9" viewBox="0 0 9 9"><g fill="#1f2937"><rect x="3.30" y="0.20" width="2.4" height="2.15" rx="0.3" transform="rotate(0 4.5 4.5)"/><rect x="3.30" y="0.20" width="2.4" height="2.15" rx="0.3" transform="rotate(60 4.5 4.5)"/><rect x="3.30" y="0.20" width="2.4" height="2.15" rx="0.3" transform="rotate(120 4.5 4.5)"/><rect x="3.30" y="0.20" width="2.4" height="2.15" rx="0.3" transform="rotate(180 4.5 4.5)"/><rect x="3.30" y="0.20" width="2.4" height="2.15" rx="0.3" transform="rotate(240 4.5 4.5)"/><rect x="3.30" y="0.20" width="2.4" height="2.15" rx="0.3" transform="rotate(300 4.5 4.5)"/></g><circle cx="4.5" cy="4.5" r="2.37" fill="none" stroke="#1f2937" stroke-width="1.81"/></svg><div class="abs" style="left:462.30px;top:637.70px;width:11.20px;height:11.20px;background:#fff;border:1px solid #eaecef;border-radius:3px"></div><div class="t" style="left:484.30px;top:637.15px;font-size:11.7px;color:#111827;font-weight:normal;letter-spacing:0.369px;-webkit-text-stroke:0.35px #111827">Generated b02040c1-c442-4db0-841e-4660a0532fcf (3)</div><div class="abs" style="left:798.30px;top:633.90px;width:24.00px;height:18.80px;background:#e0e7ff;border-radius:4px"></div><svg class="abs" style="left:805.8px;top:638.7px" width="9" height="9" viewBox="0 0 9 9"><g fill="#1f2937"><rect x="3.30" y="0.20" width="2.4" height="2.15" rx="0.3" transform="rotate(0 4.5 4.5)"/><rect x="3.30" y="0.20" width="2.4" height="2.15" rx="0.3" transform="rotate(60 4.5 4.5)"/><rect x="3.30" y="0.20" width="2.4" height="2.15" rx="0.3" transform="rotate(120 4.5 4.5)"/><rect x="3.30" y="0.20" width="2.4" height="2.15" rx="0.3" transform="rotate(180 4.5 4.5)"/><rect x="3.30" y="0.20" width="2.4" height="2.15" rx="0.3" transform="rotate(240 4.5 4.5)"/><rect x="3.30" y="0.20" width="2.4" height="2.15" rx="0.3" transform="rotate(300 4.5 4.5)"/></g><circle cx="4.5" cy="4.5" r="2.37" fill="none" stroke="#1f2937" stroke-width="1.81"/></svg><div class="abs" style="left:462.30px;top:668.60px;width:11.20px;height:11.20px;background:#fff;border:1px solid #eaecef;border-radius:3px"></div><div class="t" style="left:484.30px;top:668.05px;font-size:11.7px;color:#111827;font-weight:normal;letter-spacing:0.209px;-webkit-text-stroke:0.35px #111827">Generated e3d08a1a-5808-42e4-a1ab-81bfe327709f (3)</div><div class="abs" style="left:792.70px;top:664.80px;width:24.00px;height:18.80px;background:#e0e7ff;border-radius:4px"></div><svg class="abs" style="left:800.2px;top:669.6px" width="9" height="9" viewBox="0 0 9 9"><g fill="#1f2937"><rect x="3.30" y="0.20" width="2.4" height="2.15" rx="0.3" transform="rotate(0 4.5 4.5)"/><rect x="3.30" y="0.20" width="2.4" height="2.15" rx="0.3" transform="rotate(60 4.5 4.5)"/><rect x="3.30" y="0.20" width="2.4" height="2.15" rx="0.3" transform="rotate(120 4.5 4.5)"/><rect x="3.30" y="0.20" width="2.4" height="2.15" rx="0.3" transform="rotate(180 4.5 4.5)"/><rect x="3.30" y="0.20" width="2.4" height="2.15" rx="0.3" transform="rotate(240 4.5 4.5)"/><rect x="3.30" y="0.20" width="2.4" height="2.15" rx="0.3" transform="rotate(300 4.5 4.5)"/></g><circle cx="4.5" cy="4.5" r="2.37" fill="none" stroke="#1f2937" stroke-width="1.81"/></svg><div class="abs" style="left:462.30px;top:698.80px;width:11.20px;height:11.20px;background:#fff;border:1px solid #eaecef;border-radius:3px"></div><div class="t" style="left:484.30px;top:698.25px;font-size:11.7px;color:#111827;font-weight:normal;letter-spacing:0.256px;-webkit-text-stroke:0.35px #111827">Generated 83715b93-6c1e-4663-9417-ef23a441fc03 (3)</div><div class="abs" style="left:794.30px;top:695.00px;width:24.00px;height:18.80px;background:#e0e7ff;border-radius:4px"></div><svg class="abs" style="left:801.8px;top:699.8px" width="9" height="9" viewBox="0 0 9 9"><g fill="#1f2937"><rect x="3.30" y="0.20" width="2.4" height="2.15" rx="0.3" transform="rotate(0 4.5 4.5)"/><rect x="3.30" y="0.20" width="2.4" height="2.15" rx="0.3" transform="rotate(60 4.5 4.5)"/><rect x="3.30" y="0.20" width="2.4" height="2.15" rx="0.3" transform="rotate(120 4.5 4.5)"/><rect x="3.30" y="0.20" width="2.4" height="2.15" rx="0.3" transform="rotate(180 4.5 4.5)"/><rect x="3.30" y="0.20" width="2.4" height="2.15" rx="0.3" transform="rotate(240 4.5 4.5)"/><rect x="3.30" y="0.20" width="2.4" height="2.15" rx="0.3" transform="rotate(300 4.5 4.5)"/></g><circle cx="4.5" cy="4.5" r="2.37" fill="none" stroke="#1f2937" stroke-width="1.81"/></svg><div class="abs" style="left:455.40px;top:473.60px;width:154.60px;height:32.80px;border:2px solid #ee2438"></div><div class="abs" style="left:436.00px;top:708.80px;width:824.00px;height:11.20px;background:#fff"></div><div class="abs" style="left:1260.50px;top:54.40px;width:3.50px;height:439.90px;background:#c5cdfd;border-radius:2px"></div><div class="abs" style="left:1244.90px;top:77.30px;width:21.10px;height:15.70px;background:#ef2338;border-radius:8px;box-shadow:-1px 1px 2px rgba(0,0,0,.15)"></div><div class="t" style="left:1248.20px;top:78.80px;font-size:11.6px;color:#fff;font-weight:bold;letter-spacing:0.794px;">10</div>
</div></body></html>
